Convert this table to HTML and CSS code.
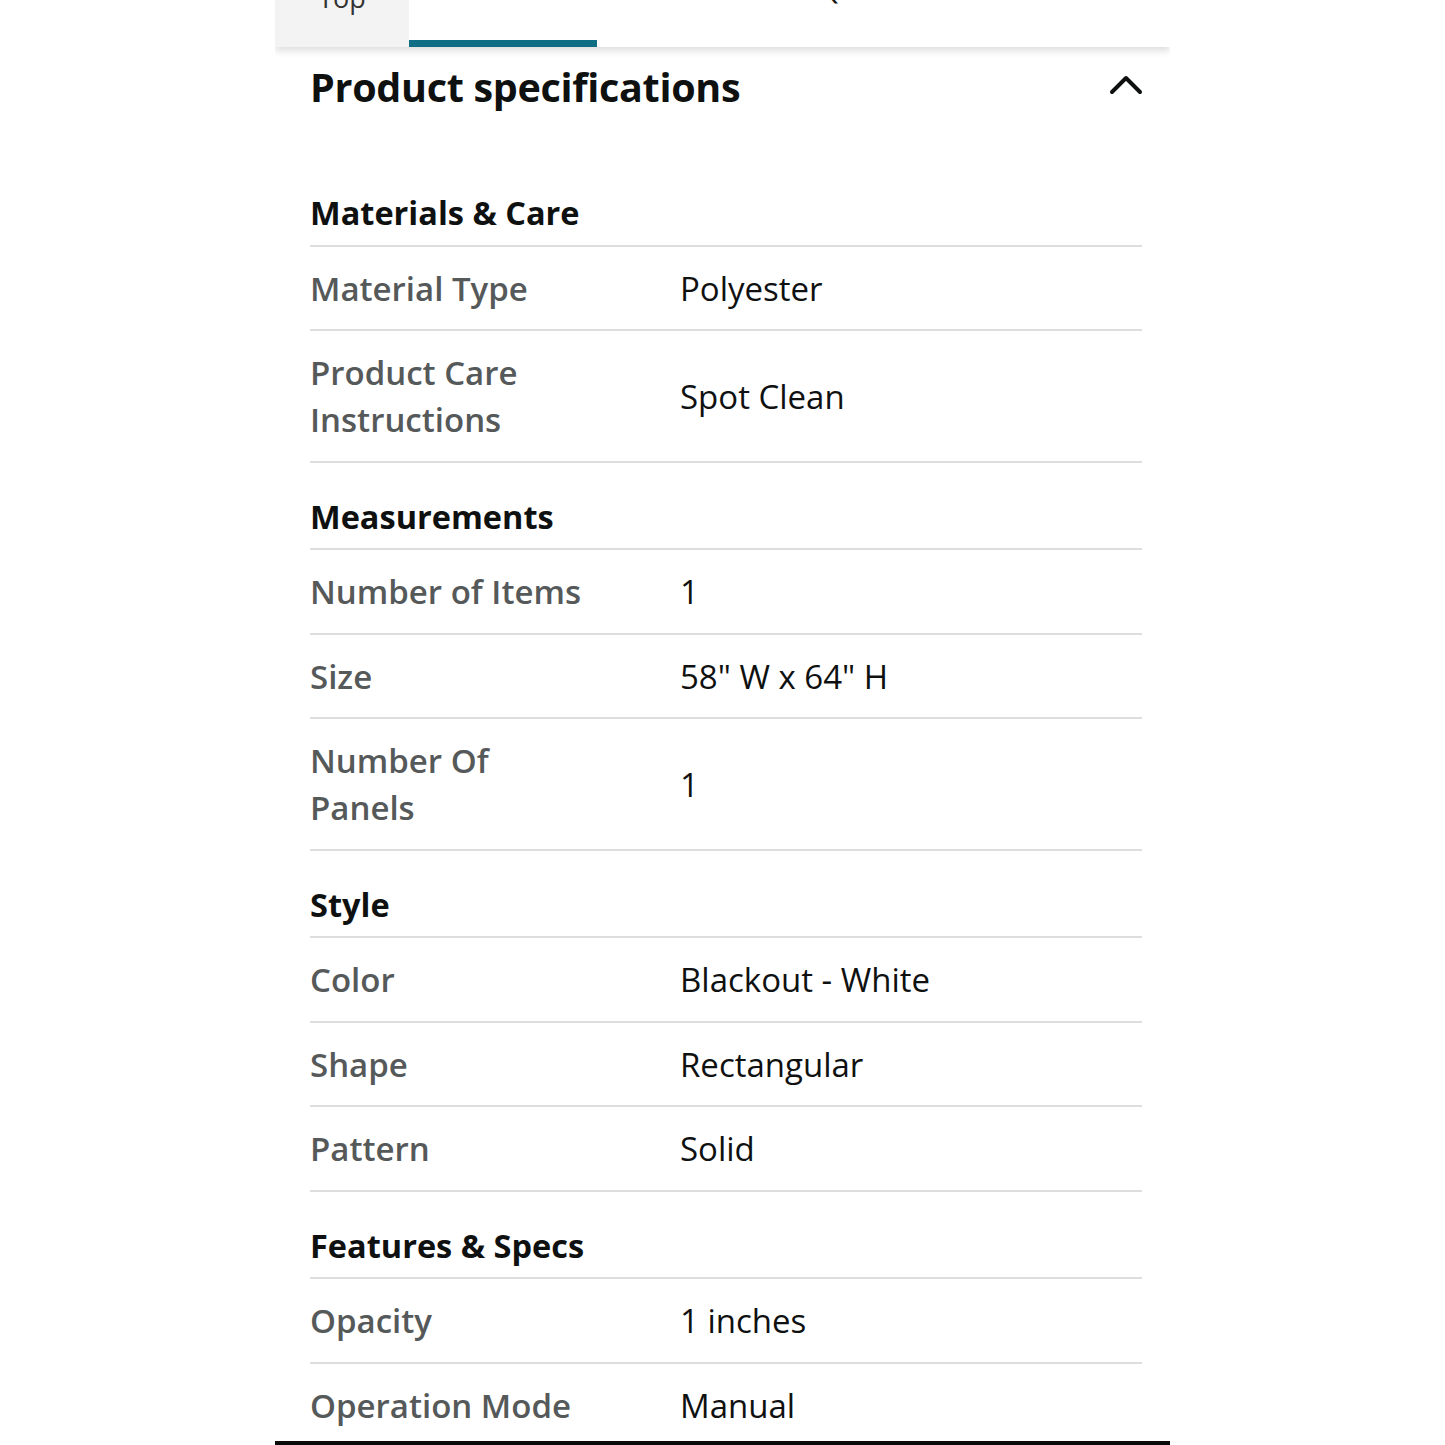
FILE: index.html
```html
<!DOCTYPE html>
<html lang="en">
<head>
<meta charset="utf-8">
<title>Product specifications</title>
<link rel="stylesheet" href="styles.css">
</head>
<body>
<div class="screen">
  <nav class="tabs">
    <div class="tab tab-top"><span class="tab-label">Top</span></div>
    <div class="tab tab-active"><span class="tab-label">Details</span></div>
    <div class="tab"><span class="tab-label">Similar</span></div>
    <div class="tab"><span class="tab-label">Questions</span></div>
    <div class="tab"><span class="tab-label">Reviews</span></div>
  </nav>

  <section class="specs">
    <header class="specs-head">
      <h2 class="specs-title">Product specifications</h2>
      <svg class="chevron" width="34" height="22" viewBox="0 0 34 22" aria-hidden="true">
        <polyline points="3,19 17,5 31,19" fill="none" stroke="#0f1111" stroke-width="4" stroke-linecap="round" stroke-linejoin="round"/>
      </svg>
    </header>

    <div class="group">
      <h3 class="group-title">Materials &amp; Care</h3>
      <div class="row"><div class="label">Material Type</div><div class="value">Polyester</div></div>
      <div class="row"><div class="label">Product Care Instructions</div><div class="value">Spot Clean</div></div>
    </div>

    <div class="group">
      <h3 class="group-title">Measurements</h3>
      <div class="row"><div class="label">Number of Items</div><div class="value">1</div></div>
      <div class="row"><div class="label">Size</div><div class="value">58" W x 64" H</div></div>
      <div class="row"><div class="label">Number Of Panels</div><div class="value">1</div></div>
    </div>

    <div class="group">
      <h3 class="group-title">Style</h3>
      <div class="row"><div class="label">Color</div><div class="value">Blackout - White</div></div>
      <div class="row"><div class="label">Shape</div><div class="value">Rectangular</div></div>
      <div class="row"><div class="label">Pattern</div><div class="value">Solid</div></div>
    </div>

    <div class="group">
      <h3 class="group-title">Features &amp; Specs</h3>
      <div class="row"><div class="label">Opacity</div><div class="value">1 inches</div></div>
      <div class="row row-last"><div class="label">Operation Mode</div><div class="value">Manual</div></div>
    </div>
  </section>
  <div class="bottom-bar"></div>
</div>
</body>
</html>
```

FILE: styles.css
```css
* { box-sizing: border-box; }

html, body {
  margin: 0;
  padding: 0;
  background: #ffffff;
}

body {
  font-family: "Open Sans", "Noto Sans", "Liberation Sans", sans-serif;
  color: #0f1111;
}

.screen {
  width: 895px;
  height: 1445px;
  margin: 0 auto;
  display: flex;
  flex-direction: column;
  overflow: hidden;
  background: #fff;
}

/* Tab bar (cut off at the top of the screenshot) */
.tabs {
  display: flex;
  height: 47px;
  flex: 0 0 47px;
  background: #fff;
  box-shadow: 0 4px 7px rgba(0, 0, 0, 0.13);
  position: relative;
  z-index: 1;
}

.tab {
  flex: 0 0 191px;
  display: flex;
  justify-content: center;
  align-items: flex-start;
  overflow: hidden;
}

.tab-top {
  flex-basis: 134px;
  background: #f3f3f3;
}

.tab-active {
  flex-basis: 188px;
  border-bottom: 7px solid #0f6e83;
}

.tab-label {
  font-size: 27px;
  line-height: 32px;
  margin-top: -27px;
  color: #0f1111;
}

.tab-top .tab-label {
  margin-top: -18px;
  color: #333;
}

.tab-active .tab-label {
  color: #0f6e83;
  margin-top: -26px;
}

/* Specifications */
.specs {
  padding: 0 28px 0 35px;
  flex: 1 1 0;
  min-height: 0;
  overflow: hidden;
}

.specs-head {
  display: flex;
  justify-content: space-between;
  align-items: flex-start;
  padding-top: 16px;
  height: 112px;
}

.specs-title {
  margin: 0;
  font-size: 39.5px;
  line-height: 48px;
  font-weight: 700;
  letter-spacing: -0.3px;
  color: #0f1111;
}

.chevron {
  margin-top: 10px;
  margin-right: -1px;
}

.group-title {
  margin: 0;
  font-size: 32.5px;
  line-height: 47px;
  font-weight: 700;
  padding: 30px 0 8.5px;
  border-bottom: 2px solid #dddddd;
  color: #0f1111;
}

.row {
  display: grid;
  grid-template-columns: 280px 1fr;
  column-gap: 90px;
  align-items: center;
  padding: 18px 0 17.5px;
  border-bottom: 2px solid #dddddd;
  font-size: 33px;
  line-height: 47px;
}

.label {
  font-weight: 600;
  color: #565959;
}

.value {
  font-weight: 400;
  color: #0f1111;
}

.bottom-bar {
  height: 4px;
  flex: 0 0 4px;
  background: #0a0a0a;
}
```
